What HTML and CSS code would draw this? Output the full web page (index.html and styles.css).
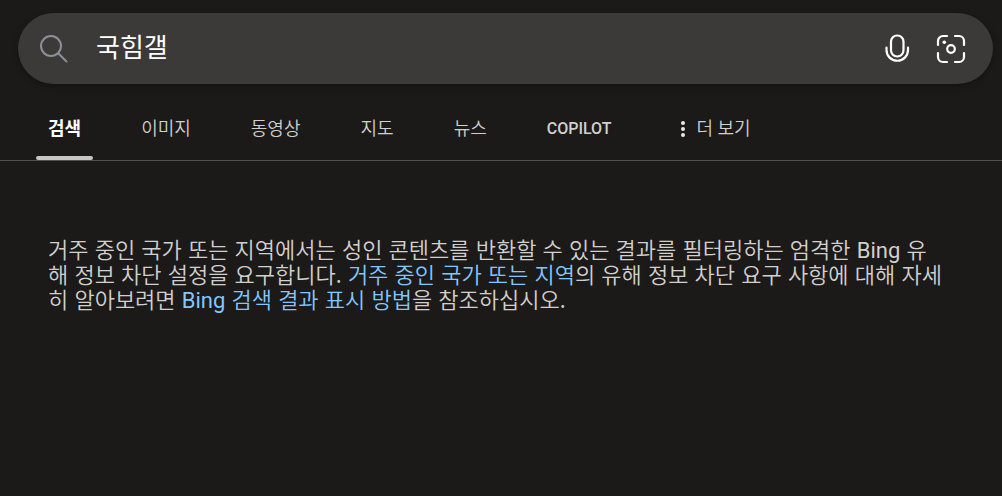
FILE: index.html
```html
<!DOCTYPE html>
<html lang="ko">
<head>
    <meta charset="UTF-8">
    <meta name="viewport" content="width=device-width, initial-scale=1.0">
    <title>국힘갤 - 검색</title>
    <link rel="stylesheet" href="styles.css">
</head>
<body>

    <!-- Search Box -->
    <header>
        <form class="search-box" role="search">
            <label for="query" class="search-icon" aria-label="검색">
                <svg width="30" height="30" viewBox="0 0 30 30" fill="none" stroke="#8a8f98" stroke-width="2" stroke-linecap="round">
                    <circle cx="12" cy="12" r="10"/>
                    <path d="M19.2 19.2L27.5 27.5"/>
                </svg>
            </label>
            <input type="text" id="query" value="국힘갤" autocomplete="off" spellcheck="false">
            <button type="button" aria-label="음성 검색">
                <svg width="30" height="30" viewBox="0 0 30 30" fill="none" stroke="#fff" stroke-width="2.2" stroke-linecap="round">
                    <rect x="9" y="1.5" width="12.5" height="21" rx="6.2"/>
                    <path d="M4.5 13.5V16a10.7 10.7 0 0 0 21.5 0v-2.5"/>
                </svg>
            </button>
            <button type="button" aria-label="이미지로 검색">
                <svg width="30" height="30" viewBox="0 0 30 30" fill="none" stroke="#fff" stroke-width="2.2" stroke-linecap="round">
                    <path d="M2 11V7a5 5 0 0 1 5-5h4M19 2h4a5 5 0 0 1 5 5v4M28 19v4a5 5 0 0 1-5 5h-4M11 28H7a5 5 0 0 1-5-5v-4"/>
                    <circle cx="15" cy="15" r="3.8"/>
                    <circle cx="8.3" cy="8.3" r="1.8" fill="#fff" stroke="none"/>
                </svg>
            </button>
        </form>
    </header>

    <!-- Scope Tabs -->
    <nav class="tabs">
        <a href="#" class="tab active" aria-current="page">검색</a>
        <a href="#" class="tab">이미지</a>
        <a href="#" class="tab">동영상</a>
        <a href="#" class="tab">지도</a>
        <a href="#" class="tab">뉴스</a>
        <a href="#" class="tab copilot">COPILOT</a>
        <button type="button" class="tab more">
            <svg width="4" height="16" viewBox="0 0 4 16" fill="#e8e8e8">
                <circle cx="2" cy="2" r="2"/>
                <circle cx="2" cy="8" r="2"/>
                <circle cx="2" cy="14" r="2"/>
            </svg>
            더 보기
        </button>
    </nav>

    <!-- Message -->
    <main>
        <p>거주 중인 국가 또는 지역에서는 성인 콘텐츠를 반환할 수 있는 결과를 필터링하는 엄격한 <span class="latin">Bing</span> 유해 정보 차단 설정을 요구합니다. <a href="#">거주 중인 국가 또는 지역</a>의 유해 정보 차단 요구 사항에 대해 자세히 알아보려면 <a href="#"><span class="latin">Bing</span> 검색 결과 표시 방법</a>을 참조하십시오.</p>
    </main>

</body>
</html>
```
FILE: styles.css
```css
/* Global Styles */
body {
    font-family: Roboto, "Noto Sans CJK KR", sans-serif;
    background-color: #1b1a19;
    color: #d2d0ce;
    margin: 0;
}

button, input {
    font-family: inherit;
    background: none;
    border: none;
    padding: 0;
}

button {
    cursor: pointer;
}

svg {
    display: block;
}

/* Search Box */
header {
    padding: 13px 9px 0 18px;
}

.search-box {
    display: flex;
    align-items: center;
    height: 71px;
    padding: 0 27px 0 21px;
    gap: 24px;
    border-radius: 36px;
    background-color: #3b3a39;
    box-shadow: 0 2px 6px rgba(0, 0, 0, 0.3);
}

.search-box input {
    flex: 1;
    min-width: 0;
    padding: 0 0 6px 3px;
    font-size: 26px;
    color: #fff;
    outline: none;
}

/* Scope Tabs */
.tabs {
    display: flex;
    gap: 20px;
    padding: 0 28px;
    border-bottom: 1px solid #505050;
}

.tab {
    display: flex;
    align-items: center;
    box-sizing: border-box;
    height: 76px;
    padding: 13px 20px 0;
    font-size: 18px;
    font-weight: 350;
    line-height: 24px;
    color: #d2d0ce;
    text-decoration: none;
    white-space: nowrap;
}

.tab.active {
    position: relative;
    font-weight: bold;
    color: #fff;
}

.tab.active::after {
    content: "";
    position: absolute;
    left: 8px;
    right: 8px;
    bottom: 0;
    height: 4px;
    border-radius: 2px;
    background-color: #c8c6c4;
}

.tab.copilot {
    font-size: 16px;
    font-weight: 500;
}

.tab.more {
    gap: 12px;
    margin-left: 9px;
}

/* Message */
main {
    padding: 75px 58px 40px 48px;
}

main p {
    margin: 0;
    padding-bottom: 8px;
    font-family: "Noto Sans CJK KR", sans-serif;
    font-size: 22px;
    font-weight: 350;
    line-height: 25px;
}

main .latin {
    font-family: Roboto, sans-serif;
    font-weight: 400;
    line-height: 20px;
}

main a {
    color: #82c7ff;
    text-decoration: none;
}
```
